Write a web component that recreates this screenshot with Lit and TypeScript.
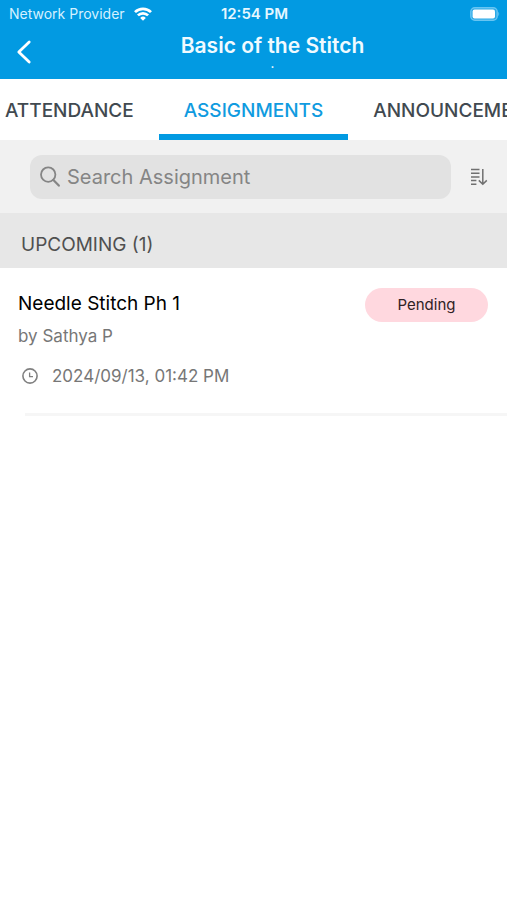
import { LitElement, html, css } from "lit";
import { customElement, state } from "lit/decorators.js";
import { classMap } from "lit/directives/class-map.js";

interface Assignment {
  title: string;
  author: string;
  due: string;
  status: string;
}

@customElement("app-root")
export class AppRoot extends LitElement {
  @state() private active = "ASSIGNMENTS";
  @state() private query = "";

  private tabs = ["ATTENDANCE", "ASSIGNMENTS", "ANNOUNCEMENTS"];
  private items: Assignment[] = [
    { title: "Needle Stitch Ph 1", author: "Sathya P", due: "2024/09/13, 01:42 PM", status: "Pending" },
  ];

  static styles = css`
    :host {
      display: block;
      min-height: 100vh;
      overflow: hidden;
      background: #fff;
      color: #000;
      font-family: Inter, "Liberation Sans", sans-serif;
    }
    * { box-sizing: border-box; }
    button, input { font: inherit; color: inherit; border: 0; padding: 0; background: none; }
    button { cursor: pointer; }
    svg { display: block; flex: none; }
    h1, h2, h3, p, ul { margin: 0; padding: 0; }
    .top { background: #029ae2; color: #fff; height: 79px; }
    .status, .bar {
      display: grid;
      grid-template-columns: 1fr auto 1fr;
      align-items: center;
    }
    .status { height: 28px; padding: 0 7px 0 9px; font-size: 14px; line-height: 20px; }
    .carrier { display: flex; align-items: center; gap: 9px; color: #d4f1ff; }
    .clock { font-size: 15px; font-weight: 600; color: #e6f7ff; }
    .battery { justify-self: end; }
    .bar { height: 48px; padding: 0 16px; }
    .back { width: 16px; height: 28px; display: grid; place-items: center; }
    .heading { text-align: center; padding-left: 38px; }
    h1 { font-size: 21px; line-height: 24px; font-weight: 600; color: #f0faff; }
    .sub { font-size: 12px; line-height: 12px; font-weight: 600; }
    .tabs { display: flex; height: 61px; overflow: hidden; }
    .tab {
      flex: none;
      padding: 8px 25px 0;
      border-bottom: 6px solid transparent;
      font-size: 19px;
      line-height: 24px;
      font-weight: 500;
      color: #414950;
    }
    .tab:first-child { padding-left: 5px; }
    .tab.on { color: #109be0; border-color: #029ae2; }
    .tools {
      display: flex;
      align-items: center;
      gap: 19px;
      height: 73px;
      padding: 0 19px 0 30px;
      background: #f1f1f1;
    }
    .search {
      flex: 1;
      min-width: 0;
      height: 44px;
      display: flex;
      align-items: center;
      gap: 7px;
      padding: 0 10px;
      border-radius: 12px;
      background: #e2e2e2;
      color: #858585;
    }
    .search input { flex: 1; min-width: 0; font-size: 20px; line-height: 28px; outline: none; }
    .search input::placeholder { color: #858585; opacity: 1; }
    h2 {
      height: 55px;
      padding: 6px 21px 0;
      background: #e7e7e7;
      color: #505050;
      font-size: 19px;
      line-height: 52px;
      font-weight: 400;
    }
    .list { list-style: none; }
    .item { padding: 20px 0 0 18px; }
    .row { display: flex; justify-content: space-between; padding-right: 19px; }
    h3 { font-size: 19px; line-height: 32px; font-weight: 400; }
    .by, .due { font-size: 17px; line-height: 32px; color: #777; }
    .due { display: flex; align-items: center; gap: 14px; padding: 8px 0 21px 4px; }
    .pill {
      width: 123px;
      height: 34px;
      border-radius: 17px;
      background: #ffd8df;
      color: #2f2225;
      font-size: 15px;
      line-height: 34px;
      text-align: center;
    }
    .line { height: 3px; margin-left: 7px; background: #f6f6f6; }
  `;

  private onSearch(e: Event) {
    this.query = (e.target as HTMLInputElement).value;
  }

  render() {
    const shown = this.items.filter((i) => i.title.toLowerCase().includes(this.query.toLowerCase()));
    return html`
      <header class="top">
        <div class="status">
          <span class="carrier">
            Network Provider
            <svg width="18" height="14" viewBox="0 0 18 14" fill="none" stroke="#fff" stroke-width="2.7">
              <path d="M1 5.1A11.3 11.3 0 0 1 17 5.1" />
              <path d="M3.9 8.4A7.2 7.2 0 0 1 14.1 8.4" />
              <path d="M6.2 10.9a4 4 0 0 1 5.6 0L9 13.7z" fill="#fff" stroke="none" />
            </svg>
          </span>
          <span class="clock">12:54 PM</span>
          <svg class="battery" width="30" height="14" viewBox="0 0 30 14">
            <rect x="0.8" y="0.8" width="26.4" height="12.4" rx="4" fill="#2ba9e7" stroke="#68c5f2" stroke-width="1.4" />
            <rect x="2.6" y="2.6" width="22.4" height="9" rx="2" fill="#fff" />
            <path d="M28.3 4.8q1.8 2.2 0 4.4z" fill="#68c5f2" />
          </svg>
        </div>
        <div class="bar">
          <button class="back" aria-label="Back">
            <svg width="16" height="24" viewBox="0 0 16 24" fill="none" stroke="#fff" stroke-width="2.8" stroke-linecap="round" stroke-linejoin="round">
              <path d="M13.2 2 2.8 12l10.4 10" />
            </svg>
          </button>
          <div class="heading">
            <h1>Basic of the Stitch</h1>
            <p class="sub">.</p>
          </div>
        </div>
      </header>
      <nav class="tabs" role="tablist">
        ${this.tabs.map(
          (t) => html`<button
            role="tab"
            aria-selected=${t === this.active}
            class=${classMap({ tab: true, on: t === this.active })}
            @click=${() => (this.active = t)}
          >${t}</button>`
        )}
      </nav>
      <div class="tools">
        <label class="search">
          <svg width="20" height="21" viewBox="0 0 20 21" fill="none" stroke="currentColor" stroke-width="1.8" stroke-linecap="round">
            <circle cx="8.2" cy="8.6" r="7.2" />
            <path d="M13.4 14l5.4 5.6" stroke-width="2.2" />
          </svg>
          <input type="text" placeholder="Search Assignment" aria-label="Search Assignment" @input=${this.onSearch} />
        </label>
        <button aria-label="Sort">
          <svg width="18" height="18" viewBox="0 0 18 18" fill="none" stroke="#707070" stroke-width="1.5">
            <path d="M1 1.5h8.5M1 5.2h8.5M1 8.9h8.5M1 12.6h5.4M1 16.3h5.4" />
            <path d="M12.8 1v15M8.8 12.4l4 3.8 4-3.8" />
          </svg>
        </button>
      </div>
      <main>
        <h2>UPCOMING (${shown.length})</h2>
        <ul class="list">
          ${shown.map(
            (i) => html`<li class="item">
              <div class="row">
                <div>
                  <h3>${i.title}</h3>
                  <p class="by">by ${i.author}</p>
                </div>
                <span class="pill">${i.status}</span>
              </div>
              <div class="due">
                <svg width="16" height="16" viewBox="0 0 16 16" fill="none" stroke="#808080" stroke-width="1.6">
                  <circle cx="8" cy="8" r="7.1" />
                  <path d="M7.6 4.4v4.2h3.4" stroke-width="1.3" />
                </svg>
                <time>${i.due}</time>
              </div>
              <div class="line"></div>
            </li>`
          )}
        </ul>
      </main>
    `;
  }
}
